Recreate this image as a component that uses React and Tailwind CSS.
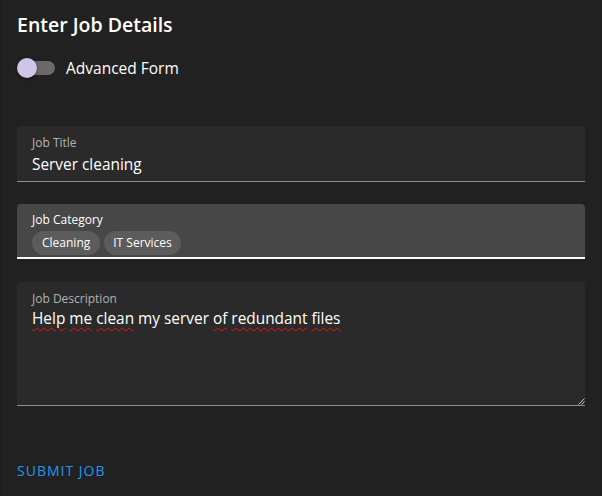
import React from "react";

const font = { fontFamily: '"Open Sans", "Noto Sans", sans-serif' };

function Wavy({ children }) {
  return (
    <span className="underline decoration-wavy decoration-[#ee1111] decoration-1 underline-offset-[3px]">
      {children}
    </span>
  );
}

export default function App() {
  return (
    <div
      className="w-[602px] h-[496px] bg-[#212121] border-x border-[#1b1b1b] px-[16px] text-white overflow-hidden"
      style={font}
    >
      <div className="pt-[12px] h-[40px] text-[19.5px] font-semibold leading-[26px]">Enter Job Details</div>

      <div className="mt-[16px] flex items-center h-[24px]">
        <div className="relative w-[40px] h-[24px] flex items-center">
          <div className="ml-[3px] w-[35px] h-[14px] rounded-full bg-[#6a6a6a]" />
          <div className="absolute left-0 top-[2px] w-[20px] h-[20px] rounded-full bg-[#d1c4e9] shadow-[0_1px_3px_rgba(0,0,0,0.5)]" />
        </div>
        <div className="ml-[9px] text-[15.5px] leading-[20px]">Advanced Form</div>
      </div>

      <div className="mt-[46px] h-[56px] rounded-t-[4px] bg-[#2a2a2a] border-b border-[#8d8d8d] px-[15px] pt-[9px]">
        <div className="text-[12px] leading-[15px] text-[#b3b3b3]">Job Title</div>
        <div className="mt-[5px] text-[15.4px] leading-[20px] text-white">Server cleaning</div>
      </div>

      <div className="mt-[22px] h-[55px] rounded-t-[4px] bg-[#474747] border-b-2 border-white px-[15px] pt-[8px]">
        <div className="text-[12px] leading-[15px] text-white">Job Category</div>
        <div className="mt-[4px] flex gap-[4px]">
          <div className="h-[24px] rounded-full bg-[#5c5c5c] px-[10px] text-[12px] leading-[24px]">Cleaning</div>
          <div className="h-[24px] rounded-full bg-[#5c5c5c] px-[9px] text-[12px] leading-[24px]">IT Services</div>
        </div>
      </div>

      <div className="relative mt-[23px] h-[124px] rounded-t-[4px] bg-[#2a2a2a] border-b border-[#8d8d8d] px-[15px] pt-[9px]">
        <div className="text-[12px] leading-[15px] text-[#b3b3b3]">Job Description</div>
        <div className="mt-[3px] text-[15.4px] leading-[20px] text-white">
          <Wavy>Help</Wavy> <Wavy>me</Wavy> <Wavy>clean</Wavy> my server <Wavy>of</Wavy>{" "}
          <Wavy>redundant</Wavy> <Wavy>files</Wavy>
        </div>
        <svg className="absolute right-0 bottom-0" width="7" height="7" viewBox="0 0 7 7">
          <line x1="0.5" y1="6.5" x2="6.5" y2="0.5" stroke="#c8c8c8" strokeWidth="1" />
          <line x1="3.5" y1="6.5" x2="6.5" y2="3.5" stroke="#c8c8c8" strokeWidth="1" />
        </svg>
      </div>

      <div className="mt-[57px] text-[14px] font-medium tracking-[1px] uppercase text-[#2196f3] leading-[16px]">
        Submit Job
      </div>
    </div>
  );
}
